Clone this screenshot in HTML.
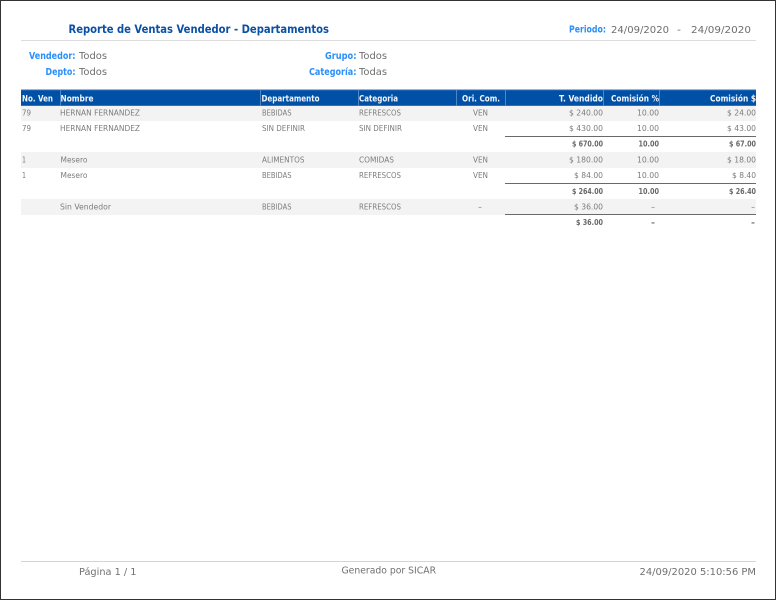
<!DOCTYPE html>
<html lang="es">
<head>
<meta charset="utf-8">
<title>Reporte de Ventas Vendedor - Departamentos</title>
<style>
html,body{margin:0;padding:0;background:#fff;}
body{width:776px;height:600px;overflow:hidden;}
svg{display:block;filter:blur(0.25px);}
text{font-family:"DejaVu Sans","Liberation Sans",sans-serif;white-space:pre;}
.t{font-size:11.5px;font-weight:bold;fill:#0a50a4;}
.l{font-size:9.5px;font-weight:bold;fill:#2a8ffa;}
.v{font-size:10px;fill:#6e6e6e;}
.h{font-size:8.5px;font-weight:bold;fill:#f2f6fb;}
.r{font-size:8px;fill:#7c7c7c;}
.b{font-size:7.5px;font-weight:bold;fill:#686868;}
.f{font-size:9.5px;fill:#707070;}
</style>
</head>
<body>
<svg width="776" height="600" viewBox="0 0 776 600" xmlns="http://www.w3.org/2000/svg">
<rect x="0.5" y="0.5" width="775" height="599" fill="#fff" stroke="#333" stroke-width="1"/>

<text class="t" x="68.5" y="33" textLength="260.5" lengthAdjust="spacingAndGlyphs">Reporte de Ventas Vendedor - Departamentos</text>
<text class="l" x="569" y="32.5" textLength="37" lengthAdjust="spacingAndGlyphs">Periodo:</text>
<text class="v" x="611" y="33" textLength="58" lengthAdjust="spacingAndGlyphs">24/09/2020</text>
<text class="v" x="677" y="33" textLength="4" lengthAdjust="spacingAndGlyphs">-</text>
<text class="v" x="691" y="33" textLength="60" lengthAdjust="spacingAndGlyphs">24/09/2020</text>
<rect x="21" y="40" width="735" height="1" fill="#dcdcdc"/>

<g transform="translate(0,-0.8)">
<text class="l" x="29" y="60" textLength="46.5" lengthAdjust="spacingAndGlyphs">Vendedor:</text>
<text class="v" x="79" y="60" textLength="28" lengthAdjust="spacingAndGlyphs">Todos</text>
<text class="l" x="45.5" y="76" textLength="30" lengthAdjust="spacingAndGlyphs">Depto:</text>
<text class="v" x="79" y="76" textLength="28" lengthAdjust="spacingAndGlyphs">Todos</text>
<text class="l" x="325" y="60" textLength="31.5" lengthAdjust="spacingAndGlyphs">Grupo:</text>
<text class="v" x="359" y="60" textLength="28" lengthAdjust="spacingAndGlyphs">Todos</text>
<text class="l" x="309" y="76" textLength="47.5" lengthAdjust="spacingAndGlyphs">Categoría:</text>
<text class="v" x="359" y="76" textLength="28" lengthAdjust="spacingAndGlyphs">Todas</text>
</g>

<rect x="21" y="89.5" width="735" height="16.5" fill="#0050a6"/>
<rect x="21" y="89.5" width="735" height="1" fill="#2f70ba"/>
<rect x="21" y="105" width="735" height="1" fill="#2f70ba"/>
<g fill="#4f86c6">
<rect x="60" y="90" width="1" height="16"/>
<rect x="260" y="90" width="1" height="16"/>
<rect x="358" y="90" width="1" height="16"/>
<rect x="456" y="90" width="1" height="16"/>
<rect x="505" y="90" width="1" height="16"/>
<rect x="603" y="90" width="1" height="16"/>
<rect x="659" y="90" width="1" height="16"/>
</g>
<g transform="translate(0,-0.5)">
<text class="h" x="22" y="102" textLength="31" lengthAdjust="spacingAndGlyphs">No. Ven</text>
<text class="h" x="60.5" y="102" textLength="33" lengthAdjust="spacingAndGlyphs">Nombre</text>
<text class="h" x="261.5" y="102" textLength="58" lengthAdjust="spacingAndGlyphs">Departamento</text>
<text class="h" x="359" y="102" textLength="39" lengthAdjust="spacingAndGlyphs">Categoria</text>
<text class="h" x="462" y="102" textLength="38" lengthAdjust="spacingAndGlyphs">Ori. Com.</text>
<text class="h" x="559" y="102" textLength="44" lengthAdjust="spacingAndGlyphs">T. Vendido</text>
<text class="h" x="611" y="102" textLength="48" lengthAdjust="spacingAndGlyphs">Comisión %</text>
<text class="h" x="710" y="102" textLength="46" lengthAdjust="spacingAndGlyphs">Comisión $</text>
</g>

<g fill="#f3f3f3">
<rect x="21" y="106" width="735" height="15"/>
<rect x="21" y="152" width="735" height="16"/>
<rect x="21" y="199" width="735" height="16"/>
</g>
<g fill="#6a6a6a">
<rect x="505" y="136" width="251" height="1"/>
<rect x="505" y="183" width="251" height="1"/>
<rect x="505" y="214" width="251" height="1"/>
</g>

<g transform="translate(0,-0.8)">
<!-- Row 1 -->
<text class="r" x="22" y="116.5" textLength="9" lengthAdjust="spacingAndGlyphs">79</text>
<text class="r" x="60" y="116.5" textLength="80" lengthAdjust="spacingAndGlyphs">HERNAN FERNANDEZ</text>
<text class="r" x="262" y="116.5" textLength="29.5" lengthAdjust="spacingAndGlyphs">BEBIDAS</text>
<text class="r" x="359" y="116.5" textLength="42" lengthAdjust="spacingAndGlyphs">REFRESCOS</text>
<text class="r" x="473" y="116.5" textLength="15" lengthAdjust="spacingAndGlyphs">VEN</text>
<text class="r" x="569" y="116.5" textLength="34" lengthAdjust="spacingAndGlyphs">$ 240.00</text>
<text class="r" x="637" y="116.5" textLength="22" lengthAdjust="spacingAndGlyphs">10.00</text>
<text class="r" x="727" y="116.5" textLength="29" lengthAdjust="spacingAndGlyphs">$ 24.00</text>

<!-- Row 2 -->
<text class="r" x="22" y="132" textLength="9" lengthAdjust="spacingAndGlyphs">79</text>
<text class="r" x="60" y="132" textLength="80" lengthAdjust="spacingAndGlyphs">HERNAN FERNANDEZ</text>
<text class="r" x="262" y="132" textLength="43" lengthAdjust="spacingAndGlyphs">SIN DEFINIR</text>
<text class="r" x="359" y="132" textLength="43" lengthAdjust="spacingAndGlyphs">SIN DEFINIR</text>
<text class="r" x="473" y="132" textLength="15" lengthAdjust="spacingAndGlyphs">VEN</text>
<text class="r" x="569" y="132" textLength="34" lengthAdjust="spacingAndGlyphs">$ 430.00</text>
<text class="r" x="637" y="132" textLength="22" lengthAdjust="spacingAndGlyphs">10.00</text>
<text class="r" x="727" y="132" textLength="29" lengthAdjust="spacingAndGlyphs">$ 43.00</text>

<!-- Total 1 -->
<text class="b" x="572" y="147.5" textLength="31" lengthAdjust="spacingAndGlyphs">$ 670.00</text>
<text class="b" x="638.5" y="147.5" textLength="20.5" lengthAdjust="spacingAndGlyphs">10.00</text>
<text class="b" x="729" y="147.5" textLength="27" lengthAdjust="spacingAndGlyphs">$ 67.00</text>

<!-- Row 3 -->
<text class="r" x="22" y="163.5" textLength="4" lengthAdjust="spacingAndGlyphs">1</text>
<text class="r" x="60.5" y="163.5" textLength="27" lengthAdjust="spacingAndGlyphs">Mesero</text>
<text class="r" x="262" y="163.5" textLength="42.5" lengthAdjust="spacingAndGlyphs">ALIMENTOS</text>
<text class="r" x="359" y="163.5" textLength="35" lengthAdjust="spacingAndGlyphs">COMIDAS</text>
<text class="r" x="473" y="163.5" textLength="15" lengthAdjust="spacingAndGlyphs">VEN</text>
<text class="r" x="569" y="163.5" textLength="34" lengthAdjust="spacingAndGlyphs">$ 180.00</text>
<text class="r" x="637" y="163.5" textLength="22" lengthAdjust="spacingAndGlyphs">10.00</text>
<text class="r" x="727" y="163.5" textLength="29" lengthAdjust="spacingAndGlyphs">$ 18.00</text>

<!-- Row 4 -->
<text class="r" x="22" y="179" textLength="4" lengthAdjust="spacingAndGlyphs">1</text>
<text class="r" x="60.5" y="179" textLength="27" lengthAdjust="spacingAndGlyphs">Mesero</text>
<text class="r" x="262" y="179" textLength="29.5" lengthAdjust="spacingAndGlyphs">BEBIDAS</text>
<text class="r" x="359" y="179" textLength="42" lengthAdjust="spacingAndGlyphs">REFRESCOS</text>
<text class="r" x="473" y="179" textLength="15" lengthAdjust="spacingAndGlyphs">VEN</text>
<text class="r" x="574" y="179" textLength="29" lengthAdjust="spacingAndGlyphs">$ 84.00</text>
<text class="r" x="637" y="179" textLength="22" lengthAdjust="spacingAndGlyphs">10.00</text>
<text class="r" x="732" y="179" textLength="24" lengthAdjust="spacingAndGlyphs">$ 8.40</text>

<!-- Total 2 -->
<text class="b" x="572" y="195" textLength="31" lengthAdjust="spacingAndGlyphs">$ 264.00</text>
<text class="b" x="638.5" y="195" textLength="20.5" lengthAdjust="spacingAndGlyphs">10.00</text>
<text class="b" x="729" y="195" textLength="27" lengthAdjust="spacingAndGlyphs">$ 26.40</text>

<!-- Row 5 -->
<text class="r" x="60" y="210.5" textLength="51" lengthAdjust="spacingAndGlyphs">Sin Vendedor</text>
<text class="r" x="262" y="210.5" textLength="29.5" lengthAdjust="spacingAndGlyphs">BEBIDAS</text>
<text class="r" x="359" y="210.5" textLength="42" lengthAdjust="spacingAndGlyphs">REFRESCOS</text>
<text class="r" x="478" y="210.5" textLength="4" lengthAdjust="spacingAndGlyphs">-</text>
<text class="r" x="574" y="210.5" textLength="29" lengthAdjust="spacingAndGlyphs">$ 36.00</text>
<text class="r" x="651" y="210.5" textLength="4" lengthAdjust="spacingAndGlyphs">-</text>
<text class="r" x="751" y="210.5" textLength="4" lengthAdjust="spacingAndGlyphs">-</text>

<!-- Total 3 -->
<text class="b" x="576" y="226" textLength="27" lengthAdjust="spacingAndGlyphs">$ 36.00</text>
<text class="b" x="651" y="226" textLength="4" lengthAdjust="spacingAndGlyphs">-</text>
<text class="b" x="751" y="226" textLength="4" lengthAdjust="spacingAndGlyphs">-</text>
</g>

<!-- Footer -->
<rect x="21" y="561" width="735" height="1" fill="#d4d4d4"/>
<text class="f" x="79" y="575" textLength="57.5" lengthAdjust="spacingAndGlyphs">Página 1 / 1</text>
<text class="f" x="341.5" y="573.5" textLength="94.5" lengthAdjust="spacingAndGlyphs">Generado por SICAR</text>
<text class="f" x="639.5" y="575" textLength="116.5" lengthAdjust="spacingAndGlyphs">24/09/2020 5:10:56 PM</text>
</svg>
</body>
</html>
